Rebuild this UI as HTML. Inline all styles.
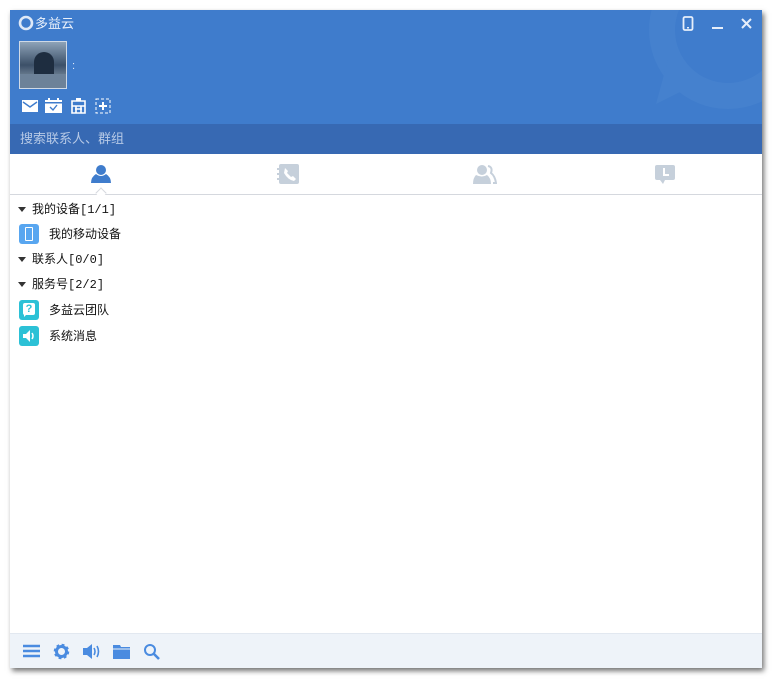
<!DOCTYPE html>
<html><head><meta charset="utf-8"><style>
*{margin:0;padding:0;box-sizing:border-box}
body{width:772px;height:679px;background:#fff;position:relative;overflow:hidden;font-family:"Liberation Sans","Noto Sans CJK SC",sans-serif}
#win{position:absolute;left:10px;top:10px;width:752px;height:658px;background:#fff;box-shadow:2px 3px 5px rgba(0,0,0,.55);overflow:hidden}
#head{position:absolute;left:0;top:0;width:752px;height:114px;background:#3f7ccc;overflow:hidden}
#search{position:absolute;left:0;top:114px;width:752px;height:30px;background:#3769b3;color:#b6c9e6;font-size:13px;line-height:30px;padding-left:10px}
#tabs{position:absolute;left:0;top:144px;width:752px;height:41px;border-bottom:1px solid #d5d8de}
.row{position:absolute;left:0;font-size:12px;color:#111;height:20px;line-height:20px}
.tri{position:absolute;left:8px;top:8px;width:0;height:0;border-left:4px solid transparent;border-right:4px solid transparent;border-top:5px solid #333}
.ic{position:absolute;left:9px;top:0;width:20px;height:20px;border-radius:3px}
#foot{position:absolute;left:0;top:623px;width:752px;height:35px;background:#eef3f9;border-top:1px solid #e2e8f0}
.m{font-family:"Liberation Mono","Noto Sans CJK SC",monospace;font-size:12px}
</style></head><body>
<div id="win">
<div id="head">
 <svg style="position:absolute;left:630px;top:-70px" width="140" height="184"><circle cx="88" cy="90" r="66" fill="none" stroke="#4581ce" stroke-width="26"/><path d="M28 120 L16 164 L52 146Z" fill="#4581ce"/></svg>
 <svg style="position:absolute;left:8px;top:5px" width="16" height="16"><circle cx="8" cy="8" r="6" fill="none" stroke="#dfe9f7" stroke-width="2.6"/></svg>
 <div style="position:absolute;left:25px;top:3px;color:#eaf1fb;font-size:13px">多益云</div>
 <svg style="position:absolute;left:672px;top:6px" width="12" height="16"><rect x="1.5" y="1" width="9" height="13" rx="1.5" fill="none" stroke="#e6eefa" stroke-width="1.8"/><rect x="5" y="11" width="2" height="1.5" fill="#e6eefa"/></svg>
 <div style="position:absolute;left:702px;top:17px;width:11px;height:2px;background:#e6eefa"></div>
 <svg style="position:absolute;left:731px;top:8px" width="11" height="11"><path d="M1 1L10 10M10 1L1 10" stroke="#e6eefa" stroke-width="2"/></svg>
 <div style="position:absolute;left:9px;top:31px;width:48px;height:48px;border:1px solid #cfd9e6;background:linear-gradient(180deg,#8ea3b8,#3c5068 50%,#9fb0c0);overflow:hidden">
  <div style="position:absolute;left:14px;top:10px;width:20px;height:22px;background:#1e2d40;border-radius:10px 10px 0 0"></div>
  <div style="position:absolute;left:0;top:32px;width:48px;height:16px;background:#6d8299"></div>
 </div>
 <div style="position:absolute;left:62px;top:50px;color:#dfe9f7;font-size:11px">:</div>
 <svg style="position:absolute;left:12px;top:90px" width="16" height="12"><rect width="16" height="12" fill="#fff"/><path d="M1 2L8 7L15 2" fill="none" stroke="#3f7ccc" stroke-width="1.4"/></svg>
 <svg style="position:absolute;left:35px;top:88px" width="17" height="15"><rect y="2" width="17" height="13" fill="#fff"/><rect x="0" y="4" width="17" height="1.5" fill="#3f7ccc"/><rect x="3" width="2" height="3" fill="#fff"/><rect x="12" width="2" height="3" fill="#fff"/><path d="M5 9L8 12L12 7" fill="none" stroke="#3f7ccc" stroke-width="1.4"/></svg>
 <svg style="position:absolute;left:61px;top:88px" width="15" height="16"><path d="M1 3H14V15H1Z M1 8H14 M5 8V15 M10 8V15 M4 11H11" fill="none" stroke="#fff" stroke-width="1.6"/><rect x="5" y="0" width="5" height="3" fill="#fff"/></svg>
 <svg style="position:absolute;left:85px;top:88px" width="16" height="16"><rect x="1" y="1" width="14" height="14" fill="none" stroke="#fff" stroke-dasharray="3 2"/><path d="M8 4V12M4 8H12" stroke="#fff" stroke-width="2"/></svg>
</div>
<div id="search">搜索联系人、群组</div>
<div id="tabs">
 <svg style="position:absolute;left:80px;top:9px" width="22" height="22"><circle cx="11" cy="7" r="5" fill="#3f7ccc"/><path d="M6 11Q11 15 16 11Q21 14 21 20H1Q1 14 6 11Z" fill="#3f7ccc"/></svg>
 <div style="position:absolute;left:87px;top:35px;width:8px;height:8px;background:#fff;border-left:1px solid #d5d8de;border-top:1px solid #d5d8de;transform:rotate(45deg)"></div>
 <svg style="position:absolute;left:267px;top:10px" width="22" height="20"><rect x="2" width="20" height="20" rx="2" fill="#c6d0db"/><rect x="0" y="4" width="4" height="2" fill="#c6d0db"/><rect x="0" y="9" width="4" height="2" fill="#c6d0db"/><rect x="0" y="14" width="4" height="2" fill="#c6d0db"/><path d="M8 4L11 7L10 9L14 13L16 12L19 15L17 17Q11 16 7 9Z" fill="#fff"/></svg>
 <svg style="position:absolute;left:463px;top:10px" width="24" height="20"><circle cx="9" cy="6" r="5" fill="#c6d0db"/><path d="M3 11Q9 14 14 11Q18 14 18 20H0Q0 14 3 11Z" fill="#c6d0db"/><path d="M15 2Q20 3 18 9Q22 12 23 19H20" fill="none" stroke="#c6d0db" stroke-width="2"/></svg>
 <svg style="position:absolute;left:645px;top:11px" width="20" height="20"><rect width="20" height="15" rx="2" fill="#c6d0db"/><path d="M5 15L8 19L10 15Z" fill="#c6d0db"/><path d="M9 3V10H14" fill="none" stroke="#fff" stroke-width="2"/></svg>
</div>
<div class="row" style="top:189px"><span class="tri"></span><span style="position:absolute;left:22px;white-space:nowrap">我的设备<span class="m">[1/1]</span></span></div>
<div class="row" style="top:214px;width:200px"><div class="ic" style="background:#58a6f0"><div style="position:absolute;left:6px;top:3px;width:8px;height:14px;border:1.5px solid #fff;border-radius:1px"></div></div><span style="position:absolute;left:39px;white-space:nowrap">我的移动设备</span></div>
<div class="row" style="top:239px"><span class="tri"></span><span style="position:absolute;left:22px;white-space:nowrap">联系人<span class="m">[0/0]</span></span></div>
<div class="row" style="top:264px"><span class="tri"></span><span style="position:absolute;left:22px;white-space:nowrap">服务号<span class="m">[2/2]</span></span></div>
<div class="row" style="top:290px;width:200px"><div class="ic" style="background:#2cc1d6"><div style="position:absolute;left:4px;top:3px;width:12px;height:12px;background:#fff;border-radius:2px;color:#2cc1d6;font-size:11px;font-weight:bold;line-height:12px;text-align:center">?</div><div style="position:absolute;left:5px;top:14px;border-left:3px solid #fff;border-bottom:3px solid transparent"></div></div><span style="position:absolute;left:39px;white-space:nowrap">多益云团队</span></div>
<div class="row" style="top:316px;width:200px"><div class="ic" style="background:#2cc1d6"><svg width="20" height="20"><path d="M4 8H7L11 4V16L7 12H4Z" fill="#fff"/><path d="M13 7Q15 10 13 13" fill="none" stroke="#fff" stroke-width="1.5"/></svg></div><span style="position:absolute;left:39px;white-space:nowrap">系统消息</span></div>
<div id="foot">
 <svg style="position:absolute;left:13px;top:10px" width="18" height="15"><path d="M0 2H17M0 7H17M0 12H17" stroke="#4a8be0" stroke-width="2.4"/></svg>
 <svg style="position:absolute;left:43px;top:9px" width="17" height="17"><circle cx="8.5" cy="8.5" r="6" fill="none" stroke="#4a8be0" stroke-width="3.5" stroke-dasharray="2.5 2.2"/><circle cx="8.5" cy="8.5" r="5" fill="none" stroke="#4a8be0" stroke-width="3"/></svg>
 <svg style="position:absolute;left:72px;top:9px" width="20" height="17"><path d="M1 5H5L10 1V16L5 12H1Z" fill="#4a8be0"/><path d="M12 5Q14 8.5 12 12M15 3Q18 8.5 15 14" fill="none" stroke="#4a8be0" stroke-width="1.6"/></svg>
 <svg style="position:absolute;left:103px;top:10px" width="18" height="15"><path d="M0 1H7L8 3H17V15H0Z" fill="#4a8be0"/><path d="M0 5H17" stroke="#eef3f9"/></svg>
 <svg style="position:absolute;left:133px;top:9px" width="18" height="18"><circle cx="7" cy="7" r="5" fill="none" stroke="#4a8be0" stroke-width="2"/><path d="M11 11L16 16" stroke="#4a8be0" stroke-width="2.6"/></svg>
</div>
</div>
</body></html>
